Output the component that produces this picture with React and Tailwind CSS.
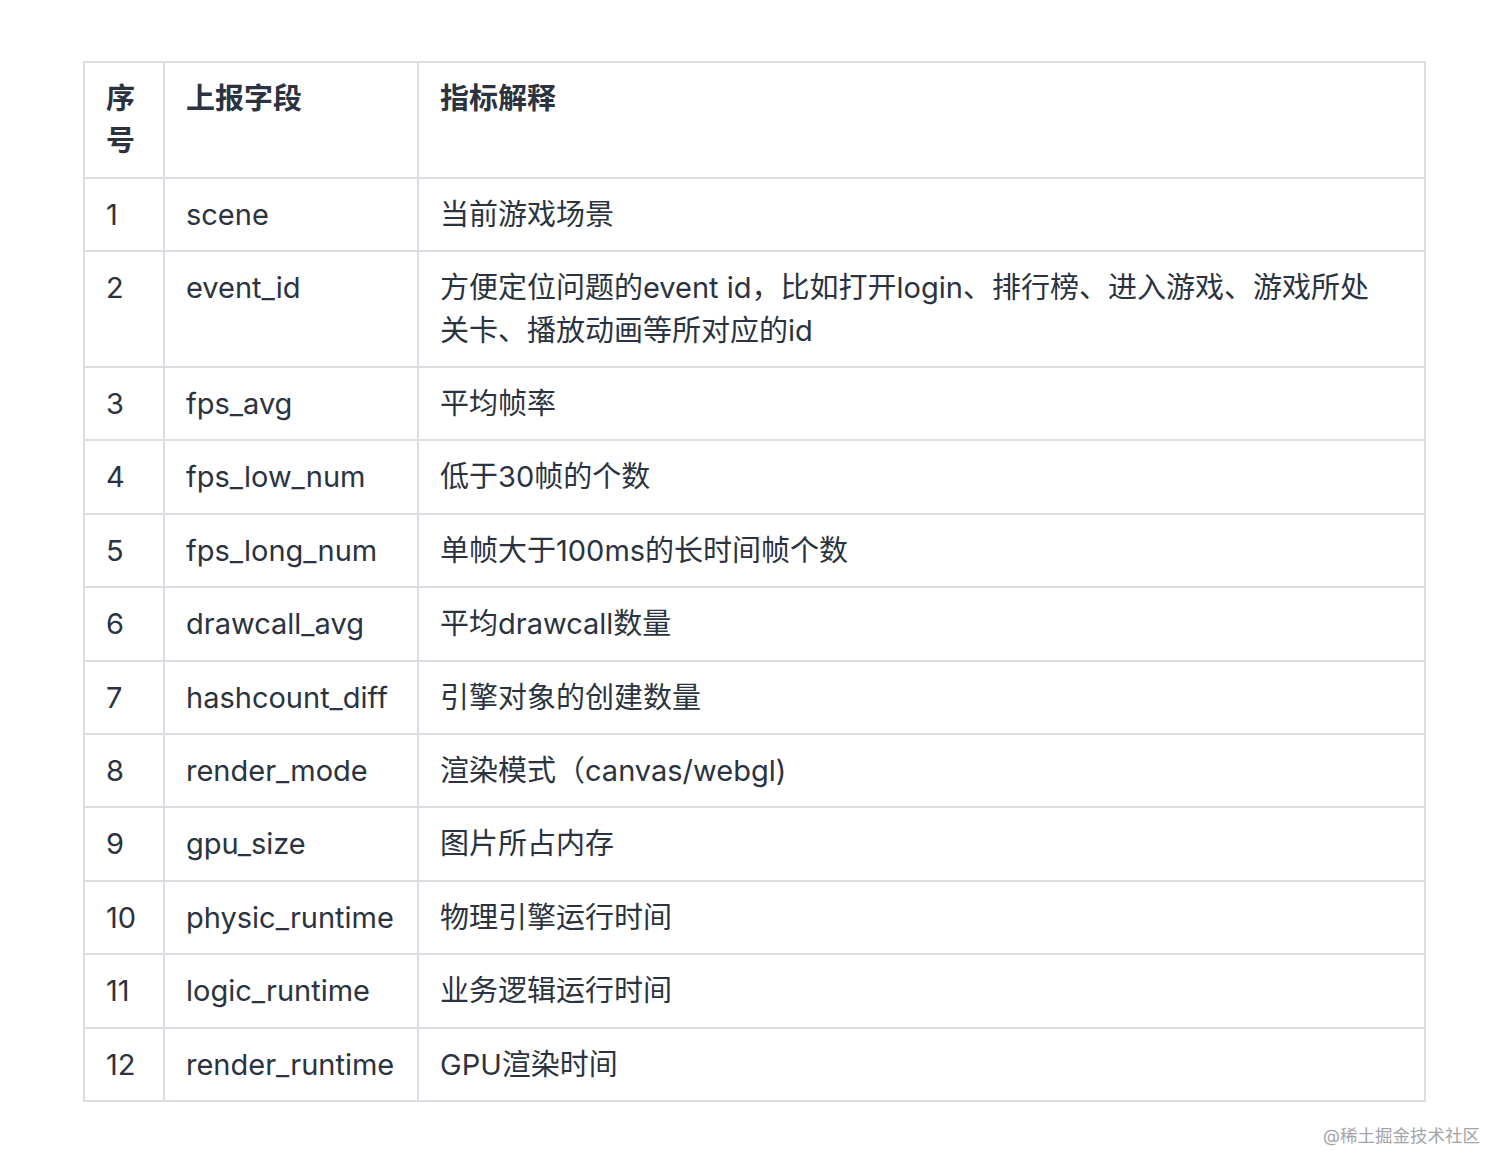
const ROWS = [
  ['1', 'scene', '当前游戏场景'],
  ['2', 'event_id', '方便定位问题的event id，比如打开login、排行榜、进入游戏、游戏所处关卡、播放动画等所对应的id'],
  ['3', 'fps_avg', '平均帧率'],
  ['4', 'fps_low_num', '低于30帧的个数'],
  ['5', 'fps_long_num', '单帧大于100ms的长时间帧个数'],
  ['6', 'drawcall_avg', '平均drawcall数量'],
  ['7', 'hashcount_diff', '引擎对象的创建数量'],
  ['8', 'render_mode', '渲染模式（canvas/webgl)'],
  ['9', 'gpu_size', '图片所占内存'],
  ['10', 'physic_runtime', '物理引擎运行时间'],
  ['11', 'logic_runtime', '业务逻辑运行时间'],
  ['12', 'render_runtime', 'GPU渲染时间'],
];

const cell = 'border-2 border-[#dcdee3] pl-[21px] pr-[20px] pt-[15px] pb-[14px] align-top';

export default function App() {
  return (
    <div
      className="min-h-[1175px] w-[1512px] bg-white pt-[61px] pl-[83px] text-[#2b3340]"
      style={{ fontFamily: 'Inter, "Noto Sans CJK SC", sans-serif' }}
    >
      <table className="w-[1343px] border-collapse text-[29px] leading-[42.4px] table-fixed">
        <colgroup>
          <col className="w-[80px]" />
          <col className="w-[254px]" />
          <col />
        </colgroup>
        <thead>
          <tr className="font-bold">
            <th className={`${cell} text-left`}>序号</th>
            <th className={`${cell} text-left`}>上报字段</th>
            <th className={`${cell} text-left`}>指标解释</th>
          </tr>
        </thead>
        <tbody>
          {ROWS.map(([n, field, desc]) => (
            <tr key={n}>
              <td className={`${cell} whitespace-nowrap`}>{n}</td>
              <td className={`${cell} whitespace-nowrap`}>{field}</td>
              <td className={`${cell} pr-[44px]`}>{desc}</td>
            </tr>
          ))}
        </tbody>
      </table>
      <div className="mt-[22px] mr-[32px] text-right text-[17.5px] leading-[24px] text-[#a3a5a8]">
        @稀土掘金技术社区
      </div>
    </div>
  );
}
